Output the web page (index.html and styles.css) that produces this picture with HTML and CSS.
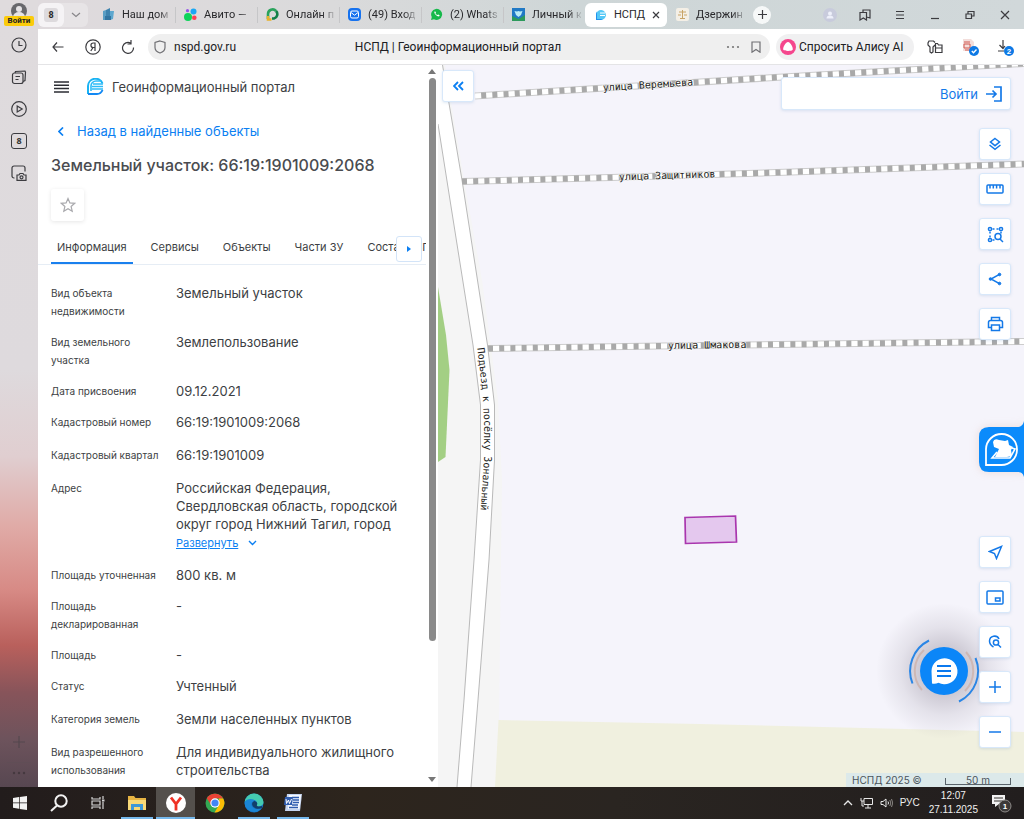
FILE: index.html
```html
<!DOCTYPE html>
<html lang="ru">
<head>
<meta charset="utf-8">
<meta name="viewport" content="width=device-width, initial-scale=1">
<title>НСПД | Геоинформационный портал</title>
<link rel="stylesheet" href="styles.css">
</head>
<body>
<div class="desktop">
  <div class="browser">
    <nav class="rail" aria-label="Боковая панель браузера">
      <button class="profile" aria-label="Профиль">
        <svg width="16" height="16" viewBox="0 0 16 16"><circle cx="8" cy="8" r="8" fill="#68686c"/><circle cx="8" cy="6" r="3" fill="#e6e4e6"/><path d="M2 14a6 5 0 0 1 12 0z" fill="#e6e4e6"/></svg>
        <span class="profile-label">Войти</span>
      </button>
      <button class="rail-btn" aria-label="История"><svg width="16" height="16" viewBox="0 0 16 16" class="line"><circle cx="8" cy="8" r="7"/><path d="M8 4v4.500h3.500"/></svg></button>
      <button class="rail-btn" aria-label="Коллекции"><svg width="16" height="16" viewBox="0 0 16 16" class="line"><rect x="1.500" y="4" width="10.500" height="10.500" rx="2"/><path d="M4 4l.5-1.500 9.500-.5.5 1L14 11.500l-2 1M4.500 7.500h4.500M4.500 10.500h3"/></svg></button>
      <button class="rail-btn" aria-label="Видео"><svg width="16" height="16" viewBox="0 0 16 16" class="line"><circle cx="8" cy="8" r="7.300"/><path d="M6.200 5l5 3-5 3z"/></svg></button>
      <button class="rail-btn rail-count" aria-label="Вкладки"><span>8</span></button>
      <button class="rail-btn" aria-label="Снимок"><svg width="16" height="16" viewBox="0 0 16 16" class="line"><path d="M3.500 13H3a2 2 0 0 1-2-2V3a2 2 0 0 1 2-2h9a2 2 0 0 1 2 2v3.500"/><path d="M6 10h2l1-1.500h3L13 10h2v5.300H6z"/><circle cx="10.500" cy="12.300" r="1.500"/></svg></button>
      <div class="rail-end">
        <button class="rail-btn dim" aria-label="Добавить"><svg width="12" height="12" viewBox="0 0 12 12" class="line"><path d="M6 0v12M0 6h12"/></svg></button>
        <button class="rail-more dim" aria-label="Ещё"><svg width="14" height="4" viewBox="0 0 14 4" fill="#2e272b"><circle cx="2" cy="2" r="1.200"/><circle cx="7" cy="2" r="1.200"/><circle cx="12" cy="2" r="1.200"/></svg></button>
      </div>
    </nav>

    <div class="window">
      <header class="tabbar">
        <div class="tabgroup">
          <button class="tab-total"><span>8</span></button>
          <button class="tab-drop" aria-label="Список вкладок"><svg width="10" height="6" viewBox="0 0 10 6" class="line grey"><path d="M1 1l4 3.500L9 1"/></svg></button>
        </div>
        <div class="tabs-strip">
          <a class="btab" href="#"><svg width="13" height="13" viewBox="0 0 13 13"><path d="M1 3l3-1v10H1z" fill="#5b9ec4"/><path d="M4 2l4-2v12H4z" fill="#3f83ae"/><path d="M8 3h4l-1 8-3 1z" fill="#5da7cf"/><path d="M3 8h6v4H3z" fill="#3375a1"/></svg><span>Наш дом</span></a>
          <a class="btab" href="#"><svg width="13" height="13" viewBox="0 0 13 13"><circle cx="4" cy="9" r="4" fill="#0fd35a"/><circle cx="9.500" cy="3.500" r="3" fill="#19a7f5"/><circle cx="3.500" cy="2.700" r="1.600" fill="#9654e8"/><circle cx="10.300" cy="9.800" r="2.300" fill="#ff4053"/></svg><span>Авито —</span></a>
          <a class="btab" href="#"><svg width="13" height="13" viewBox="0 0 13 13" fill="none" stroke-width="2.600"><path d="M2 11V6a4.600 4.600 0 0 1 8-3" stroke="#2aa35c"/><path d="M10 3a4.500 4.500 0 0 1-2 7.500H6" stroke="#128048"/><path d="M2 8v3.500h3.500" stroke="#e7b22e"/></svg><span>Онлайн п</span></a>
          <a class="btab" href="#"><svg width="13" height="13" viewBox="0 0 13 13"><rect width="13" height="13" rx="4" fill="#1672ef"/><rect x="2.500" y="3" width="8" height="7" rx="1.500" fill="none" stroke="#fff"/><path d="M3 4.500l3.500 2.700L10 4.500" fill="none" stroke="#fff"/></svg><span>(49) Вход</span></a>
          <a class="btab" href="#"><svg width="13" height="13" viewBox="0 0 13 13"><path d="M1 12l.8-3A5.500 5.500 0 1 1 4 11.200z" fill="#16b94b"/><path d="M4.500 3.500c-1 1.500 2 5 4.500 5l.7-1.300-1.500-.8-.7.700C6.500 7 5.500 5.800 5.500 5.300l.5-.6-.6-1.300z" fill="#fff"/></svg><span>(2) Whats</span></a>
          <a class="btab" href="#"><svg width="13" height="13" viewBox="0 0 13 13"><rect width="13" height="13" fill="#2179c5"/><path d="M0 8l6.500 3L13 7v6H0z" fill="#2d9a5c"/><path d="M2.500 3L5 3.500 6.500 3 8 3.500l2.500-.5L9 7 6.500 9 4 7z" fill="#b9ecf6"/></svg><span>Личный к</span></a>
          <a class="btab active" href="#" aria-current="page"><svg width="13" height="13" viewBox="0 0 13 13"><path d="M2 12V6.500A5 5 0 1 1 7 12z" fill="#55c8f6"/><path d="M6 5h5M6 7.500h5" stroke="#fff"/><path d="M2 12V6.500a5 5 0 0 1 1-3v7.500h6l-2 1z" fill="#2191ee"/></svg><span>НСПД</span><svg width="8" height="8" viewBox="0 0 8 8" class="line"><path d="M1 1l6 6M7 1L1 7"/></svg></a>
          <a class="btab last" href="#"><svg width="13" height="13" viewBox="0 0 13 13"><rect width="13" height="13" rx="2" fill="#f4efe6"/><path d="M6.500 2v8M3 4h7M2 7h3M8 7h3M4 10.500h5" stroke="#c9a467" fill="none"/></svg><span>Дзержин</span></a>
          <button class="tab-new" aria-label="Новая вкладка"><svg width="9" height="9" viewBox="0 0 9 9" class="line"><path d="M4.500 0v9M0 4.500h9"/></svg></button>
        </div>
        <div class="wincontrols">
          <button aria-label="Аккаунт"><svg width="14" height="14" viewBox="0 0 14 14"><circle cx="7" cy="7" r="7" fill="#c8cbdc"/><circle cx="7" cy="5.500" r="2" fill="#eef0fa"/><path d="M3.500 10.500a3.500 3 0 0 1 7 0z" fill="#eef0fa"/></svg></button>
          <button aria-label="Закладки"><svg width="12" height="12" viewBox="0 0 12 12" class="line"><path d="M1 3.500h6.500v7.500L4.300 9 1 11zM4 3.500V1h7v8l-3.500-1"/></svg></button>
          <button aria-label="Меню"><svg width="10" height="10" viewBox="0 0 10 10" class="line"><path d="M1 1.500h8M1 5h8M1 8.500h8"/></svg></button>
          <button aria-label="Свернуть"><svg width="10" height="10" viewBox="0 0 10 10" class="line"><path d="M1 8.500h8"/></svg></button>
          <button aria-label="Развернуть окно"><svg width="10" height="10" viewBox="0 0 10 10" class="line"><path d="M1 4h5.500v4.500H1zM3 4V1.500h6V6H6.500"/></svg></button>
          <button aria-label="Закрыть"><svg width="10" height="10" viewBox="0 0 10 10" class="line"><path d="M1 1l8 8M9 1L1 9"/></svg></button>
        </div>
      </header>

      <div class="toolbar">
        <button class="tool" aria-label="Назад"><svg width="12" height="12" viewBox="0 0 12 12" class="line"><path d="M11.500 6H1M5 1.500L1 6l4 4.500"/></svg></button>
        <button class="tool" aria-label="Яндекс"><svg width="16" height="16" viewBox="0 0 16 16" class="line"><circle cx="8" cy="8" r="7.200"/><path d="M10 12V4H8.200a2.200 2.200 0 0 0 0 4.500H10M8 8.500L5.800 12"/></svg></button>
        <button class="tool" aria-label="Обновить"><svg width="14" height="14" viewBox="0 0 14 14" class="line"><path d="M12.500 7.500A5.500 5.500 0 1 1 9.500 3M6.500 4H10V0"/></svg></button>
        <div class="omnibox">
          <div class="omni-left">
            <svg width="12" height="14" viewBox="0 0 12 14" class="line soft"><path d="M6 1l5 1.500v5C11 10 9 12 6 13 3 12 1 10 1 7.500v-5z"/></svg>
            <input class="url" type="text" value="nspd.gov.ru" aria-label="Адрес страницы">
          </div>
          <span class="page-title">НСПД | Геоинформационный портал</span>
          <div class="omni-right">
            <svg width="14" height="4" viewBox="0 0 14 4" fill="#777"><circle cx="2" cy="2" r="1.100"/><circle cx="7" cy="2" r="1.100"/><circle cx="12" cy="2" r="1.100"/></svg>
            <svg width="10" height="12" viewBox="0 0 10 12" class="line soft"><path d="M1 1h8v10.200L5 8.500l-4 2.700z"/></svg>
          </div>
        </div>
        <button class="alice"><svg width="16" height="16" viewBox="0 0 16 16"><circle cx="8" cy="8" r="8" fill="#f5478d"/><path d="M8 3c2.500 0 5.500 6 4.700 7.700C12 12.300 4 12.300 3.300 10.700 2.500 9 5.500 3 8 3z" fill="#fff"/></svg>Спросить Алису AI</button>
        <button class="tool" aria-label="Пароли"><svg width="16" height="14" viewBox="0 0 16 14" class="line"><path d="M8 2.500L6.500 1H2L1 3v2l2 2v5l1.500 1L6 12V7l2-2M8 3.500h2.500l1 1.500H15v7.500H8.500V3.500M9 8h5.500"/></svg></button>
        <button class="tool" aria-label="Расширение"><svg width="18" height="18" viewBox="0 0 18 18"><path d="M2 1h8l3 3v9H2z" fill="#f3dedb"/><path d="M3 4h6M3 6v4h6V6zM4 12h5" stroke="#d0574e" fill="none"/><circle cx="13" cy="13" r="5" fill="#0d79e5"/><path d="M10.800 13l1.700 1.700 3-3.200" stroke="#fff" fill="none" stroke-width="1.400"/></svg></button>
        <button class="tool" aria-label="Загрузки"><svg width="18" height="18" viewBox="0 0 18 18"><path d="M7 2v8M3.500 7L7 10.500 9 8M2 13h6" class="line"/><circle cx="13" cy="13" r="5" fill="#0d79e5"/><text x="13" y="16" class="badge-num">2</text></svg></button>
      </div>

      <main class="page">
        <section class="panel">
          <div class="panel-body">
            <header class="portal-head">
              <button class="burger" aria-label="Меню портала"><svg width="15" height="12" viewBox="0 0 15 12"><path d="M0 1h15M0 4.300h15M0 7.600h15M0 11h15" stroke="#2b2d33" stroke-width="1.500"/></svg></button>
              <svg width="17" height="17" viewBox="0 0 17 17"><path d="M1 16V8a7.500 7.500 0 0 1 14.500-2.500" fill="none" stroke="#1ab3f3" stroke-width="2"/><path d="M1 16h9c3 0 4.500-1.500 5.500-4" fill="none" stroke="#1389f3" stroke-width="2"/><path d="M4 13V8a5 5 0 0 1 5-5h5M6 6h10M5 8.500h11M5 11h11" fill="none" stroke="#2ebcf8" stroke-width="1.600"/></svg>
              <span>Геоинформационный портал</span>
            </header>
            <a class="back" href="#"><svg width="6" height="9" viewBox="0 0 6 9"><path d="M5 .5l-4 4 4 4" fill="none" stroke="#0b7ff2" stroke-width="1.700"/></svg>Назад в найденные объекты</a>
            <h1 class="object-title">Земельный участок: 66:19:1901009:2068</h1>
            <button class="fav" aria-label="В избранное"><svg width="16" height="16" viewBox="0 0 16 16"><path d="M8 1.500l1.900 4.400 4.800.4-3.600 3.200 1.100 4.700L8 11.700l-4.200 2.500 1.100-4.700L1.300 6.300l4.800-.4z" fill="none" stroke="#a9a9ad" stroke-width="1.200"/></svg></button>
            <div class="otabs">
              <a class="otab current" href="#">Информация</a>
              <a class="otab" href="#">Сервисы</a>
              <a class="otab" href="#">Объекты</a>
              <a class="otab" href="#">Части ЗУ</a>
              <a class="otab" href="#">Состав ЕЗП</a>
              <button class="otab-next" aria-label="Следующие вкладки"><svg width="4" height="6" viewBox="0 0 4 6"><path d="M0 0l4 3-4 3z" fill="#0b7ff2"/></svg></button>
            </div>
            <dl class="facts">
              <div class="fact"><dt>Вид объекта недвижимости</dt><dd>Земельный участок</dd></div>
              <div class="fact"><dt>Вид земельного участка</dt><dd>Землепользование</dd></div>
              <div class="fact"><dt>Дата присвоения</dt><dd>09.12.2021</dd></div>
              <div class="fact roomy"><dt>Кадастровый номер</dt><dd>66:19:1901009:2068</dd></div>
              <div class="fact roomy"><dt>Кадастровый квартал</dt><dd>66:19:1901009</dd></div>
              <div class="fact"><dt>Адрес</dt><dd>Российская Федерация, Свердловская область, городской округ город Нижний Тагил, город<a class="expand" href="#"><span>Развернуть</span><svg width="9" height="6" viewBox="0 0 9 6"><path d="M1 1l3.500 3.500L8 1" fill="none" stroke="#0b7ff2" stroke-width="1.400"/></svg></a></dd></div>
              <div class="fact"><dt>Площадь уточненная</dt><dd>800 кв. м</dd></div>
              <div class="fact"><dt>Площадь декларированная</dt><dd>-</dd></div>
              <div class="fact"><dt>Площадь</dt><dd>-</dd></div>
              <div class="fact roomy"><dt>Статус</dt><dd>Учтенный</dd></div>
              <div class="fact roomy"><dt>Категория земель</dt><dd>Земли населенных пунктов</dd></div>
              <div class="fact"><dt>Вид разрешенного использования</dt><dd>Для индивидуального жилищного строительства</dd></div>
            </dl>
          </div>
          <div class="scroll" aria-hidden="true">
            <svg width="8" height="5" viewBox="0 0 8 5"><path d="M0 5l4-5 4 5z" fill="#777"/></svg>
            <div class="track"><div class="thumb"></div></div>
            <svg width="8" height="5" viewBox="0 0 8 5"><path d="M0 0l4 5 4-5z" fill="#777"/></svg>
          </div>
        </section>

        <section class="map" aria-label="Карта">
          <svg class="map-canvas" viewBox="438 65 586 722" preserveAspectRatio="xMinYMin slice">
            <defs>
              <path id="road-axis" d="M477 346 L482.500 392 L484 420 L484 460 L480 520 L478 560"/>
              <path id="st-a" d="M475 96 L774 77.500 L1024 63.500"/>
              <path id="st-b" d="M462 181.500 L611 177.500 L777 172.500 L1024 164"/>
              <path id="st-c" d="M488 348.500 L660 346 L777 344.500 L1024 341.500"/>
            </defs>
            <rect x="438" y="65" width="586" height="722" fill="#f5f5f5"/>
            <path d="M445 65H1024V787H497L499 720 502 480 498 400 482 280 464 180z" fill="#f5f4fb"/>
            <path d="M498.500 720L700 724 1024 732V787H495z" fill="#f0f0df"/>
            <path d="M438 287L446 335 449.500 370 445.500 457 438 462z" fill="#a3cf84"/>
            <path d="M438 65H442.500L462 180 487.500 345 494.500 405 494.500 460 489 560 478 700 471 787H457L464 700 474 560 480.500 460 480.500 405 473 345 450 200 438 124z" fill="#fff"/>
            <path d="M442.500 65L462 180 487.500 345 494.500 405 494.500 460 489 560 478 700 471 787M457 787L464 700 474 560 480.500 460 480.500 405 473 345 450 200 438 124" fill="none" stroke="#b9b9b9"/>
            <g fill="none">
              <g stroke="#cdcdcd" stroke-width="7"><use href="#st-a"/><use href="#st-b"/><use href="#st-c"/></g>
              <g stroke="#fff" stroke-width="5"><use href="#st-a"/><use href="#st-b"/><use href="#st-c"/></g>
              <g stroke="#a9a9a9" stroke-width="6" stroke-dasharray="5 6.200"><use href="#st-a" stroke-dashoffset="5"/><use href="#st-b"/><use href="#st-c"/></g>
            </g>
            <g class="street">
              <text><textPath href="#st-a" startOffset="128"><tspan dy="3">улица Веремьева</tspan></textPath></text>
              <text><textPath href="#st-b" startOffset="157"><tspan dy="3">улица Защитников</tspan></textPath></text>
              <text><textPath href="#st-c" startOffset="180"><tspan dy="3">улица Шмакова</tspan></textPath></text>
              <text><textPath href="#road-axis" startOffset="2">Подъезд к посёлку Зональный</textPath></text>
            </g>
            <path d="M685 517.500L735.500 516 736.500 542 685.500 543.500z" fill="#e4c8ee" stroke="#a936ae" stroke-width="1.700"/>
          </svg>

          <button class="collapse" aria-label="Свернуть панель"><svg width="11" height="10" viewBox="0 0 11 10"><path d="M5 1L1 5l4 4M10 1L6 5l4 4" fill="none" stroke="#0b7ff2" stroke-width="1.800"/></svg></button>

          <div class="login"><a href="#">Войти<svg width="18" height="16" viewBox="0 0 18 16"><path d="M9 1h7v14H9M1 8h10M7.500 4.500L11 8l-3.500 3.500" fill="none" stroke="#1479e8" stroke-width="1.700"/></svg></a></div>

          <button class="chat" aria-label="Чат"><svg width="72" height="72" viewBox="0 0 72 72"><defs><radialGradient id="haze"><stop offset="35%" stop-color="#4d4258" stop-opacity=".24"/><stop offset="65%" stop-color="#4d4258" stop-opacity=".1"/><stop offset="100%" stop-color="#4d4258" stop-opacity="0"/></radialGradient></defs><circle cx="36" cy="36" r="68" fill="url(#haze)"/><circle cx="36" cy="36" r="24" fill="#0b86f8"/><path d="M23.500 36a13 13 0 1 1 7 11.800Q27 49.500 24 48.500z" fill="#fff"/><path d="M29 31h14M29 36h14M29 41h14" stroke="#0b79ee" stroke-width="2"/><g fill="none"><path d="M21 5.500A34 34 0 0 0 4.500 48.500M67.500 23A34 34 0 0 1 51 66.500" stroke="#2a86e6" stroke-width="2"/><path d="M16 15a28.500 28.500 0 0 0-2 40M58 17a28.500 28.500 0 0 1-1 39" stroke="#cdb8b5" stroke-width="2"/></g></svg></button>

          <div class="map-tools top">
            <button class="mtool" aria-label="Слои"><svg width="14" height="14" viewBox="0 0 14 14"><path d="M7 1.500l4.500 3.500L7 8.700 2.500 5zM1.500 8L7 12.300 12.500 8"/></svg></button>
            <button class="mtool" aria-label="Измерения"><svg width="18" height="10" viewBox="0 0 18 10"><rect x="1" y="1" width="16" height="8" rx="1"/><path d="M4 1v3.500M7.300 1v3.500M10.600 1v3.500M14 1v3.500"/></svg></button>
            <button class="mtool" aria-label="Поиск по области"><svg width="17" height="17" viewBox="0 0 17 17"><circle cx="3" cy="3" r="1.600"/><circle cx="14" cy="3" r="1.600"/><circle cx="3" cy="14" r="1.600"/><path d="M5.500 3h2M9.500 3h2M3 5.500v2M3 9.500v2M14 5.500v2M5.500 14h2"/><circle cx="11" cy="10.500" r="3"/><path d="M13 13l3 3"/></svg></button>
            <button class="mtool" aria-label="Поделиться"><svg width="14" height="14" viewBox="0 0 14 14"><path d="M11 2.700L3 7l8 4.300"/><g fill="#1479e8" stroke-width="1"><circle cx="11.500" cy="2.500" r="1.300"/><circle cx="2.500" cy="7" r="1.300"/><circle cx="11.500" cy="11.500" r="1.300"/></g></svg></button>
            <button class="mtool" aria-label="Печать"><svg width="17" height="16" viewBox="0 0 17 16"><path d="M4.500 4.500V1.500h8v3M4.500 11.500H1.500v-5c0-1 1-2 2-2h10c1 0 2 1 2 2v5h-3"/><rect x="4.500" y="9" width="8" height="5.500"/></svg></button>
          </div>

          <button class="feedback" aria-label="Обратная связь"><svg width="45" height="56" viewBox="0 0 45 56"><path d="M45 0c-1 4-3 6-7 6H10Q0 6 0 16V41Q0 51 10 51H38c4 0 6 1 7 5z" fill="#0b8bfb"/><path d="M7 44V28a15.500 15.500 0 1 1 15.500 16z" fill="none" stroke="#fff" stroke-width="1.800"/><path d="M14 21q1-4 6-2l6 1 3-1 1 5 4 2-2 3 1 6-5 1H16l4-8-5-2z" fill="#fff"/><path d="M18 31l-5 6h18l5-9-3-1" fill="none" stroke="#fff" stroke-width="1.600"/></svg></button>

          <div class="map-tools bottom">
            <button class="mtool" aria-label="Моё местоположение"><svg width="15" height="15" viewBox="0 0 15 15"><path d="M13.500 1.500L1.500 6.500l5 2 2 5z"/></svg></button>
            <button class="mtool" aria-label="Мини-карта"><svg width="18" height="15" viewBox="0 0 18 15"><rect x="1" y="1" width="16" height="13" rx="1"/><rect x="9.500" y="8" width="4.500" height="3"/></svg></button>
            <button class="mtool" aria-label="Найти здесь"><svg width="14" height="14" viewBox="0 0 14 14"><path d="M5.500 12C3 10.500 1.500 8.500 1.500 6a5 5 0 0 1 9.500-2"/><circle cx="8" cy="7.500" r="2.600"/><path d="M10 9.500l3 3"/></svg></button>
            <button class="mtool" aria-label="Приблизить"><svg width="12" height="12" viewBox="0 0 12 12"><path d="M6 0v12M0 6h12"/></svg></button>
            <button class="mtool" aria-label="Отдалить"><svg width="12" height="12" viewBox="0 0 12 12"><path d="M0 6h12"/></svg></button>
          </div>

          <div class="attribution"><span>НСПД 2025 ©</span><span class="scale">50 m</span></div>
        </section>
      </main>
    </div>
  </div>

  <footer class="taskbar">
    <div class="apps">
      <button class="app" aria-label="Пуск"><svg width="14" height="14" viewBox="0 0 14 14" fill="#f2f2f2"><path d="M0 2l6-1v5.500H0zM6.700 1L14 0v6.500H6.700zM0 7.300h6v5.500l-6-1zM6.700 7.300H14V14l-7.300-1z"/></svg></button>
      <button class="app" aria-label="Поиск"><svg width="18" height="18" viewBox="0 0 18 18"><circle cx="11" cy="7" r="5.700" fill="none" stroke="#f2f2f2" stroke-width="2"/><path d="M7 11.500L1 17" stroke="#f2f2f2" stroke-width="2"/></svg></button>
      <button class="app" aria-label="Представление задач"><svg width="14" height="14" viewBox="0 0 14 14" fill="none" stroke="#d6d6d6" stroke-width="1.200"><path d="M1 1v2h8V1M1 13v-2h8v2M1 5h8v4H1zM12 0v3M12 6v7"/><path d="M11 4.500h2.500" stroke-width="2"/></svg></button>
      <button class="app open" aria-label="Проводник"><svg width="18" height="16" viewBox="0 0 18 16"><path d="M0 1h6l1.500 2H18v12H0z" fill="#e7b443"/><path d="M0 5h18v10H0z" fill="#f8d978"/><path d="M3 15V9h12v6h-3v-3H6v3z" fill="#3d98d8"/></svg></button>
      <button class="app open front" aria-label="Яндекс Браузер"><svg width="20" height="20" viewBox="0 0 20 20"><circle cx="10" cy="10" r="10" fill="#fff"/><path d="M5 4.500l5 6.500 5-6.500M10 10.500v7" fill="none" stroke="#ef3124" stroke-width="2.800"/></svg></button>
      <button class="app" aria-label="Chrome"><svg width="20" height="20" viewBox="0 0 20 20"><circle cx="10" cy="10" r="9.500" fill="#33a853"/><path d="M1.800 5.200A9.500 9.500 0 0 1 18.200 5.500H10L6 12z" fill="#e94235"/><path d="M18.200 5.500A9.500 9.500 0 0 1 9.500 19.500L14 12V5.500z" fill="#fbbc05"/><circle cx="10" cy="10" r="4.700" fill="#fff"/><circle cx="10" cy="10" r="3.600" fill="#4285f4"/></svg></button>
      <button class="app open" aria-label="Edge"><svg width="20" height="20" viewBox="0 0 20 20"><circle cx="10" cy="10" r="9.500" fill="#1671c4"/><path d="M.6 9A9.500 9.500 0 0 1 19.500 9c.2 3-2 4.500-5 4.500-2 0-2.500-1-1.500-2 1-3-2-5-5-4.800C4.500 6.500 2 7.500.6 9z" fill="#45cbb0"/><path d="M.6 9.500C3 5 9 5.500 10.500 8 7 8.500 6.500 12 9 14.500c2 2 6 2 8.500.8A9.500 9.500 0 0 1 .6 9.500z" fill="#1a86d6"/><path d="M10.500 8C7.500 9 7.500 12 9.500 14c2 2 6 2 8.500 1v-2c-3 1-6 .5-5-1.500 1-1.500-1-3-2.500-3.500z" fill="#123f6b"/></svg></button>
      <button class="app open" aria-label="Word"><svg width="19" height="18" viewBox="0 0 19 18"><path d="M4 0h15l-2 17H2z" fill="#c5d5f1"/><path d="M6 1h12l-1.500 14H5z" fill="#f6f9ff"/><path d="M9 3.500h7M10 6h6M10 8.500h6M9 11h6M6 13.500h9" stroke="#2f5cae" stroke-width="1.400"/><path d="M2 3h8l-1 8H1z" fill="#2f5cae"/><path d="M3 5l.5 4.500L5.500 6l1 3.500 2-4.500" fill="none" stroke="#fff"/></svg></button>
    </div>
    <div class="tray">
      <svg width="10" height="6" viewBox="0 0 10 6" fill="none" stroke="#e8e8e8" stroke-width="1.300"><path d="M1 5l4-4 4 4"/></svg>
      <svg width="13" height="12" viewBox="0 0 13 12" fill="none" stroke="#e8e8e8"><path d="M4 1.500h8.500v6H4zM8 7.500V11M5 11h6M1 1v3h3M2 4v5h2"/></svg>
      <svg width="13" height="12" viewBox="0 0 13 12" fill="none" stroke="#e8e8e8"><path d="M1 4.500h2L6 2v8L3 7.500H1z"/><path d="M8 4.500q1 1.500 0 3"/><path d="M9.800 3q2 3 0 6M11.500 2q2.500 4 0 8" stroke="#8a8784"/></svg>
      <span>РУС</span>
      <time class="clock"><span>12:07</span><span>27.11.2025</span></time>
      <svg width="22" height="20" viewBox="0 0 22 20"><path d="M1 2h13v9H8l-4 3v-3H1z" fill="#f2f2f2"/><path d="M3 5h9M3 8h9" stroke="#34302e"/><circle cx="14" cy="13" r="6" fill="#3c3938" stroke="#8d8a88"/><text x="14" y="16" class="badge-num">1</text></svg>
    </div>
  </footer>
</div>
</body>
</html>
```
FILE: styles.css
```css
* { box-sizing: border-box; }

body {
  margin: 0;
  font-family: Inter, "Liberation Sans", sans-serif;
  font-size: 13px;
  color: #3d3f44;
}

button {
  margin: 0;
  padding: 0;
  border: 0;
  background: none;
  font: inherit;
  color: inherit;
}

a { color: inherit; text-decoration: none; }
svg { flex: none; }

.line { fill: none; stroke: #3c3c40; stroke-width: 1.2; }
.grey { stroke: #88868a; }
.soft { stroke: #707074; }

.badge-num {
  fill: #fff;
  font-family: "Liberation Sans", sans-serif;
  font-size: 8px;
  font-weight: 700;
  text-anchor: middle;
}

.desktop { display: flex; flex-direction: column; height: 100vh; overflow: hidden; }
.browser { display: flex; flex: 1; min-height: 0; }

/* Browser rail */
.rail {
  display: flex;
  flex-direction: column;
  align-items: center;
  width: 38px;
  padding-top: 3px;
  background: linear-gradient(#dfdbdd 0%, #dedadd 47%, #e0ced0 58%, #e0aaa6 67%, #d78a85 75%, #b9605c 82%, #87545a 88%, #6d535c 94%, #574751 100%);
}
.profile { display: flex; flex-direction: column; align-items: center; height: 26px; }
.profile-label {
  margin-top: -3px;
  padding: 0 4px;
  border-radius: 2px;
  background: #fbcb0a;
  color: #222;
  font: 700 8px/10px Roboto, sans-serif;
}
.rail-btn { display: grid; place-items: center; width: 32px; height: 32px; }
.rail-count span {
  width: 16px;
  height: 16px;
  border: 1px solid #3c3c40;
  border-radius: 3px;
  font: 700 9px/14px "Open Sans", sans-serif;
  color: #333;
}
.rail-end { display: flex; flex-direction: column; align-items: center; margin-top: auto; }
.rail-more { display: grid; place-items: center; width: 24px; height: 20px; margin: 4px 0 5px; border-top: 1px solid #5e4e56; }
.dim { opacity: 0.5; }

.window { display: flex; flex: 1; flex-direction: column; min-width: 0; }

/* Tab strip */
.tabbar {
  display: flex;
  align-items: center;
  height: 29px;
  padding-right: 2px;
  background: linear-gradient(90deg, #dfdadd, #dadadb 30%, #ced6d7 55%, #d1d8da);
  font: 11px/16px Roboto, "Noto Sans", sans-serif;
  color: #29292c;
}
.tabgroup { display: flex; height: 24px; border-radius: 6px; background: #e7e4e6; }
.tab-total { display: grid; place-items: center; width: 26px; border-radius: 6px; background: #f5f3f5; }
.tab-total span { width: 14px; border-radius: 3px; background: #dddadd; font-size: 9px; font-weight: 700; line-height: 14px; }
.tab-drop { display: grid; place-items: center; width: 24px; }
.tabs-strip { display: flex; flex: 1; align-items: center; min-width: 0; margin-left: 5px; overflow: hidden; }
.btab { display: flex; flex: 0 1 82px; align-items: center; gap: 7px; min-width: 0; height: 24px; padding: 0 4px 0 9px; }
.btab + .btab:not(.active):not(.last) { background: linear-gradient(#c6c6c8, #c6c6c8) 0 center / 1px 16px no-repeat; }
.btab span { overflow: hidden; white-space: nowrap; mask-image: linear-gradient(90deg, #000 36px, #0003 48px); }
.active { border-radius: 6px; background: #fff; }
.btab.active span { overflow: visible; mask-image: none; }
.tab-new { display: grid; flex: none; place-items: center; width: 18px; height: 18px; margin-left: 4px; border-radius: 50%; background: #f6f8f8; }
.wincontrols { display: flex; }
.wincontrols button { display: grid; place-items: center; width: 35px; height: 28px; }

/* Address row */
.toolbar {
  display: flex;
  align-items: center;
  height: 36px;
  padding: 0 2px;
  border-bottom: 1px solid #e4e4e6;
  background: #fff;
  color: #202023;
  font: 12px/16px Roboto, "Noto Sans", sans-serif;
}
.tool { display: grid; place-items: center; width: 35px; height: 30px; }
.omnibox {
  display: grid;
  flex: 1;
  grid-template-columns: 1fr auto 1fr;
  align-items: center;
  min-width: 0;
  height: 26px;
  margin: 0 6px 0 3px;
  padding: 0 8px 0 6px;
  border-radius: 13px;
  background: #efefef;
}
.omni-left, .omni-right { display: flex; align-items: center; min-width: 0; }
.omni-left { gap: 8px; }
.omni-right { justify-content: flex-end; gap: 11px; padding-right: 1px; }
.url { width: 100%; padding: 0; border: 0; outline: 0; background: transparent; color: inherit; font: inherit; }
.page-title { white-space: nowrap; }
.alice {
  display: flex;
  align-items: center;
  gap: 3px;
  width: 138px;
  height: 26px;
  margin-right: 3px;
  padding-left: 4px;
  border-radius: 13px;
  background: #f0f0f1;
  white-space: nowrap;
}

.page { display: flex; flex: 1; min-height: 0; background: #fff; }

/* Object panel */
.panel { display: flex; flex: none; width: 400px; }
.panel-body { flex: 1; min-width: 0; overflow: hidden; }
.portal-head { display: flex; align-items: center; gap: 8px; height: 43px; padding-left: 16px; }
.burger { display: grid; margin-right: 10px; }
.back { display: flex; align-items: center; gap: 13px; height: 30px; margin: 8px 0; padding-left: 20px; color: #0b7ff2; }
.object-title { margin: 0 13px; font-size: 16px; font-weight: 500; line-height: 22px; color: #4a4c50; }
.fav {
  display: grid;
  place-items: center;
  width: 33px;
  height: 32px;
  margin: 13px 13px 8px;
  border-radius: 3px;
  box-shadow: 0 1px 4px #0000001a;
}
.otabs {
  position: relative;
  display: flex;
  gap: 12px;
  height: 36px;
  padding-left: 13px;
  border-bottom: 1px solid #e6edf5;
  overflow: hidden;
}
.otab { flex: none; padding: 0 6px; font-size: 11px; line-height: 36px; white-space: nowrap; }
.current { border-bottom: 2px solid #1a80ee; }
.otab-next {
  position: absolute;
  top: 7px;
  right: 4px;
  display: grid;
  place-items: center;
  width: 26px;
  height: 26px;
  border: 1px solid #d3e4f8;
  border-radius: 3px;
  background: #fff;
}
.facts { display: flex; flex-direction: column; gap: 13px; margin: 19px 13px 0; }
.fact { display: grid; grid-template-columns: 112px 222px; gap: 13px; line-height: 18px; }
.roomy { min-height: 20px; }
.fact dt { font-size: 10px; }
.fact dd { margin: 0; }
.expand { display: flex; align-items: center; gap: 10px; height: 20px; color: #0b7ff2; font-size: 11px; }
.expand span { text-decoration: underline; }

.scroll { display: flex; flex-direction: column; align-items: center; gap: 4px; width: 12px; padding: 4px 0 5px; }
.track { flex: 1; width: 7px; }
.thumb { height: 81%; border-radius: 4px; background: #8a8a8a; }

/* Map */
.map { position: relative; flex: 1; min-width: 0; overflow: hidden; background: #f5f4fb; }
.map-canvas { position: absolute; inset: 0; width: 100%; height: 100%; }
.street text {
  fill: #1f1f22;
  stroke: #ffffffb0;
  stroke-width: 1.5;
  paint-order: stroke;
  font-family: "DejaVu Sans Mono", monospace;
  font-size: 10px;
}
.collapse, .mtool, .login {
  border: 1px solid #d8e8fa;
  border-radius: 3px;
  background: #fff;
  box-shadow: 0 1px 3px #4a7ab52b;
}
.collapse { position: absolute; top: 5px; left: 4px; display: grid; place-items: center; width: 32px; height: 32px; }
.login {
  position: absolute;
  top: 12px;
  right: 13px;
  display: flex;
  align-items: center;
  justify-content: flex-end;
  width: 230px;
  height: 33px;
  padding-right: 7px;
  color: #1479e8;
}
.login a { display: flex; align-items: center; gap: 7px; }
.map-tools { position: absolute; right: 13px; display: flex; flex-direction: column; gap: 13px; }
.top { top: 63px; }
.bottom { bottom: 39px; }
.mtool { display: grid; place-items: center; width: 32px; height: 32px; }
.mtool svg { fill: none; stroke: #1479e8; stroke-width: 1.5; }
.feedback { position: absolute; top: 356px; right: 0; display: grid; filter: drop-shadow(0 0 4px #d9a58f50); }
.chat { position: absolute; right: 44px; bottom: 80px; display: grid; }
.chat svg { overflow: visible; }
.attribution {
  position: absolute;
  right: 0;
  bottom: 0;
  display: flex;
  justify-content: space-between;
  width: 178px;
  height: 14px;
  padding: 0 13px 0 6px;
  background: #dce9ea;
  color: #4a545c;
  font-size: 10px;
  line-height: 14px;
}
.scale {
  width: 66px;
  height: 7px;
  margin-top: 5px;
  border: 1px solid #59636a;
  border-top: 0;
  line-height: 4px;
  text-align: center;
}

/* Taskbar */
.taskbar {
  display: flex;
  flex: none;
  justify-content: space-between;
  height: 32px;
  background: linear-gradient(90deg, #221c1c, #2d251d 35%, #2a2521 60%, #221e1e);
  color: #f0f0f0;
  font: 10px/14px "Liberation Sans", Roboto, sans-serif;
}
.apps { display: flex; }
.app { display: grid; place-items: center; width: 39px; }
.open { background: linear-gradient(#76b9ed, #76b9ed) center bottom / 32px 2px no-repeat; }
.front { background: linear-gradient(#76b9ed, #76b9ed) center bottom / 39px 2px no-repeat, #54504c; }
.tray { display: flex; align-items: center; gap: 7px; padding-right: 11px; }
.clock { display: flex; flex-direction: column; align-items: center; margin: 0 6px 0 2px; }
```
